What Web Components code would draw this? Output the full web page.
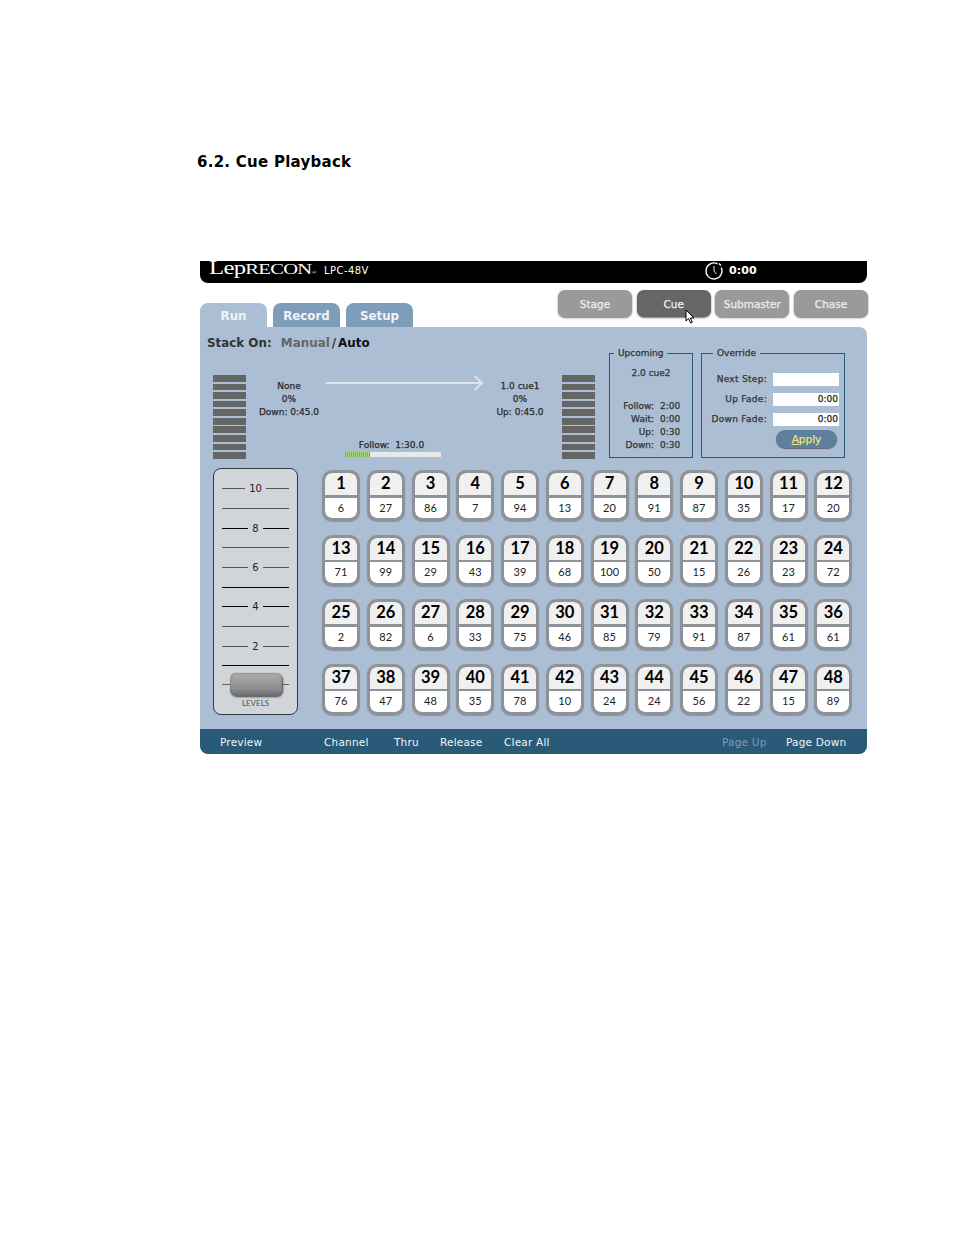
<!DOCTYPE html>
<html><head><meta charset="utf-8">
<style>
html,body{margin:0;background:#fff}
body{width:954px;height:1235px;overflow:hidden;font-family:"DejaVu Sans",sans-serif}
</style></head><body>
<doc-page>
  <span slot="title">6.2. Cue Playback</span>
  <lp-app>
    <lp-topbar slot="top"></lp-topbar>
    <lp-nav slot="nav">
      <lp-tab slot="tabs" active>Run</lp-tab><lp-tab slot="tabs">Record</lp-tab><lp-tab slot="tabs">Setup</lp-tab>
      <lp-mode slot="modes">Stage</lp-mode><lp-mode slot="modes" active>Cue</lp-mode><lp-mode slot="modes">Submaster</lp-mode><lp-mode slot="modes">Chase</lp-mode>
    </lp-nav>
    <lp-panel slot="panel">
      <lp-status slot="status"></lp-status>
      <lp-box slot="up" label="Upcoming" w="84" off="4"><lp-upcoming></lp-upcoming></lp-box>
      <lp-box slot="over" label="Override" w="144" off="11"><lp-override></lp-override></lp-box>
      <lp-fader slot="fader"></lp-fader>
      <lp-keys slot="keys"></lp-keys>
    </lp-panel>
    <lp-footer slot="footer"></lp-footer>
  </lp-app>
</doc-page>
<script>
const def=(name,html)=>customElements.define(name,class extends HTMLElement{
  constructor(){super();this.attachShadow({mode:'open'});}
  connectedCallback(){this.shadowRoot.innerHTML=typeof html==='function'?html(this):html;}
});
const UI='"DejaVu Sans",sans-serif';
const MED=`-webkit-text-stroke:.25px currentColor;`;
def('doc-page',`<style>
:host{display:block;padding-top:153px}
h2{margin:0 0 0 197px;font:bold 15px/18px "DejaVu Sans",sans-serif;letter-spacing:.26px;color:#000}
.wrap{margin:90px 0 0 200px;width:667px;position:relative}
svg{position:absolute;left:485px;top:48px}
</style><h2><slot name="title"></slot></h2><div class="wrap"><slot></slot>
<svg width="10" height="15" viewBox="0 0 10 15"><path d="M1 1v11l2.600-2.400 2 4.400 1.800-.8-2-4.200h3.600z" fill="#fff" stroke="#000" stroke-width="1"/></svg></div>`);
def('lp-app',`<style>:host{display:block}</style><slot name="top"></slot><slot name="nav"></slot><slot name="panel"></slot><slot name="footer"></slot>`);
def('lp-topbar',`<style>
:host{display:flex;align-items:center;height:22px;box-sizing:border-box;padding-bottom:3px;background:#000;border-radius:0 0 8px 8px;color:#fff;font-family:${UI}}
.logo{margin-left:9px;width:109px;flex:none;font:18px/19px "Liberation Serif",serif;letter-spacing:-.5px;white-space:nowrap;transform-origin:left;transform:scaleX(1.37)}
.logo small{font-size:15px}.logo sup{font-size:5px;vertical-align:baseline}
.model{margin-left:6px;font-size:10px;letter-spacing:.45px;width:380px;flex:none}
svg{display:block;flex:none}
.time{margin-left:5px;font-size:11px;font-weight:bold;letter-spacing:.1px}
</style><div class="logo">Lep<small>RECON</small><sup>®</sup></div><div class="model">LPC-48V</div>
<svg width="20" height="20" viewBox="0 0 20 20" fill="none" stroke="#fff"><path d="M13.500 2.800A8 8 0 1 0 17.200 6.500" stroke-width="1.300"/><path d="M15 2.500l2 2" stroke-width="1.500"/><path d="M10 5v5l2.500 3" stroke-width=".9"/></svg>
<div class="time">0:00</div>`);
def('lp-nav',`<style>
:host{display:flex;justify-content:space-between;align-items:flex-end;height:44px}
.t,.m{display:flex}.t{gap:6px}.m{gap:4.700px;margin:0 -1px 10px 0}
</style><div class="t"><slot name="tabs"></slot></div><div class="m"><slot name="modes"></slot></div>`);
def('lp-tab',h=>`<style>
:host{display:flex;align-items:center;justify-content:center;width:67px;height:24px;box-sizing:border-box;padding-top:2px;border-radius:8px 8px 0 0;font:bold 11.800px ${UI};color:#f1f4f7;background:${h.hasAttribute('active')?'#abbfd4':'#7d9db9'}}
</style><slot></slot>`);
def('lp-mode',h=>`<style>
:host{display:flex;align-items:center;justify-content:center;width:74px;height:27px;border-radius:7px;font:10.500px ${UI};${MED}color:#efefef;box-shadow:0 1px 2px #777;background:${h.hasAttribute('active')?'#666':'#9a9a9a'}}
</style><slot></slot>`);
def('lp-panel',`<style>
:host{display:block;height:402px;background:#abbed3;border-radius:0 8px 0 0;font-family:${UI};box-sizing:border-box}
.top{display:flex;height:141px;padding-left:7px}
.s{width:388px}.boxes{display:flex;gap:8px;margin:21px 0 0 14px;height:110px}
.bottom{display:flex;padding-left:13px}
.k{margin-left:24px;padding-top:2px}
</style><div class="top"><div class="s"><slot name="status"></slot></div><div class="boxes"><slot name="up"></slot><slot name="over"></slot></div></div>
<div class="bottom"><slot name="fader"></slot><div class="k"><slot name="keys"></slot></div></div>`);
def('lp-status',()=>{
 const bars='<i></i>'.repeat(10);
 return `<style>
:host{display:block;color:#222}
.stack{font:bold 11.900px/15px ${UI};padding-top:9px;height:48px;box-sizing:border-box;color:#333;white-space:nowrap}
.stack b{color:#666;margin-left:5px;font-weight:bold}.stack s{text-decoration:none;margin:0 2px}.stack em{font-style:normal;color:#111}
.row{display:flex;padding-left:6px}
.meter{display:flex;flex-direction:column;gap:1.900px;width:33px;flex:none}
.meter i{display:block;height:6.700px;background:#666}
.mid{width:316px;flex:none;display:flex;flex-direction:column;height:83px}
.info{display:grid;grid-template-columns:86px 150px 76px;font:9px/13px ${UI};${MED}text-align:center;padding-top:5px;height:65px;box-sizing:border-box;color:#2a2a2a}
svg{display:block;margin:-5px 0 0 -6px;overflow:visible}
.follow{margin-left:99px;width:96px;text-align:center;font:9px/11px ${UI};${MED}color:#2a2a2a;white-space:nowrap}
.f{margin-left:-3px}
.bar{margin-top:1px;height:5px;background:#e9e9e9}
.bar i{display:block;height:5px;width:25px;background:repeating-linear-gradient(90deg,#5fc22a 0 1px,#a8dc80 1px 2px)}
</style>
<div class="stack">Stack On: <b>Manual</b><s>/</s><em>Auto</em></div>
<div class="row"><div class="meter">${bars}</div>
<div class="mid"><div class="info"><div>None<br>0%<br>Down: 0:45.0</div>
<svg width="157" height="16" viewBox="0 0 157 16" fill="none" stroke="#dfe4ea" stroke-width="2"><path d="M0 8H156M148.500 1l7.500 7-7.500 7"/></svg>
<div>1.0 cue1<br>0%<br>Up: 0:45.0</div></div>
<div class="follow"><div class="f">Follow:&nbsp; 1:30.0</div><div class="bar"><i></i></div></div></div>
<div class="meter">${bars}</div></div>`;});
def('lp-box',h=>`<style>
:host{display:block}
fieldset{margin:0;padding:0;border:1px solid #2a5a78;width:${h.getAttribute('w')}px;height:110px;box-sizing:border-box;min-width:0;font-family:${UI}}
legend{margin-left:${h.getAttribute('off')}px;padding:0 4px;font:9px/11px ${UI};${MED}color:#333}
</style><fieldset><legend>${h.getAttribute('label')}</legend><slot></slot></fieldset>`);
def('lp-upcoming',`<style>
:host{display:block;font:9px/13px ${UI};${MED}color:#333}
.n{text-align:center;padding-top:8px;height:33px}
.g{display:grid;grid-template-columns:44px auto;column-gap:6px}
.g span:nth-child(odd){text-align:right}
</style><div class="n">2.0 cue2</div><div class="g"><span>Follow:</span><span>2:00</span><span>Wait:</span><span>0:00</span><span>Up:</span><span>0:30</span><span>Down:</span><span>0:30</span></div>`);
def('lp-override',`<style>
:host{display:block;font:9px/13px ${UI};${MED}color:#333}
.g{display:grid;grid-template-columns:65px 66px;column-gap:6px;row-gap:7px;padding-top:14px}
.g span{text-align:right;white-space:nowrap;letter-spacing:.3px}
.g i{display:block;height:13px;background:#fff;font-style:normal;text-align:right;color:#222;padding-right:1px;box-sizing:border-box}
.a{margin:4px 0 0 74px;width:61px;height:18px;border-radius:9px;background:#5f7f9e;color:#e8e67c;font:10.500px/18px ${UI};${MED}text-align:center;box-shadow:0 1px 1px #667}
u{text-decoration:underline}
</style><div class="g"><span>Next Step:</span><i></i><span>Up Fade:</span><i>0:00</i><span>Down Fade:</span><i>0:00</i></div><div class="a"><u>A</u>pply</div>`);
def('lp-fader',()=>{
 const rows=[['10','#555'],['', '#555'],['8','#000'],['', '#555'],['6','#555'],['', '#000'],['4','#000'],['', '#555'],['2','#555'],['', '#000']];
 const r=rows.map(([l,c])=>`<div class="r">${l?`<i style="background:${c}"></i><span>${l}</span><i style="background:${c}"></i>`:`<i style="background:${c}"></i>`}</div>`).join('');
 return `<style>
:host{display:block;width:85px;height:247px;box-sizing:border-box;border:1.500px solid #2c3b47;border-radius:8px;background:#d1d4d9;padding:9.800px 8px 0;color:#222}
.r{display:flex;align-items:center;height:19.700px;gap:4px}
.r i{flex:1;height:1px}
.r span{font:10px ${UI};color:#222}
.th{height:23px;margin-top:-3px;display:flex;align-items:center}
.th i{flex:1;height:1px;background:#666}
.th b{display:block;width:52px;height:23px;border-radius:6px;background:linear-gradient(#aeaeae,#8d8d8d 70%,#6a6a6a);box-shadow:1px 1px 2px #444, inset 0 0 2px #666}
.l{text-align:center;font:8px/10px "Lato",sans-serif;color:#555;margin-top:2px}
</style>${r}<div class="th"><i></i><b></b><i></i></div><div class="l">LEVELS</div>`;});
def('lp-keys',()=>{
 const v=[6,27,86,7,94,13,20,91,87,35,17,20,71,99,29,43,39,68,100,50,15,26,23,72,2,82,6,33,75,46,85,79,91,87,61,61,76,47,48,35,78,10,24,24,56,22,15,89];
 return `<style>:host{display:grid;grid-template-columns:repeat(12,38px);column-gap:6.750px;row-gap:13.500px}</style>`+v.map((x,i)=>`<lp-key n="${i+1}" v="${x}"></lp-key>`).join('');});
def('lp-key',h=>`<style>
:host{display:flex;flex-direction:column;width:38px;height:51px;box-sizing:border-box;border:3px solid #8f9398;border-radius:10px;background:#8f9398;overflow:hidden;box-shadow:0 1px 1px #8295a9}
.a{height:22px;background:#f0f0f0;font:bold 16.500px/20px "Lato",sans-serif;color:#000;text-align:center;border-radius:7px 7px 0 0}
.b{margin-top:2.500px;flex:1;background:#fff;font:11px/20px "Lato",sans-serif;color:#222;text-align:center;border-radius:0 0 7px 7px}
</style><div class="a">${h.getAttribute('n')}</div><div class="b">${h.getAttribute('v')}</div>`);
def('lp-footer',`<style>
:host{display:flex;align-items:center;height:25px;background:#295a78;border-radius:0 0 8px 8px;color:#f2f5f7;font:10.500px ${UI};letter-spacing:.2px;padding-left:20px;white-space:nowrap}
span{display:block}.d{color:#7f9cb1}
</style><span style="width:104px">Preview</span><span style="width:70px">Channel</span><span style="width:46px">Thru</span><span style="width:64px">Release</span><span style="width:218px">Clear All</span><span class="d" style="width:64px">Page Up</span><span>Page Down</span>`);
</script></body></html>
